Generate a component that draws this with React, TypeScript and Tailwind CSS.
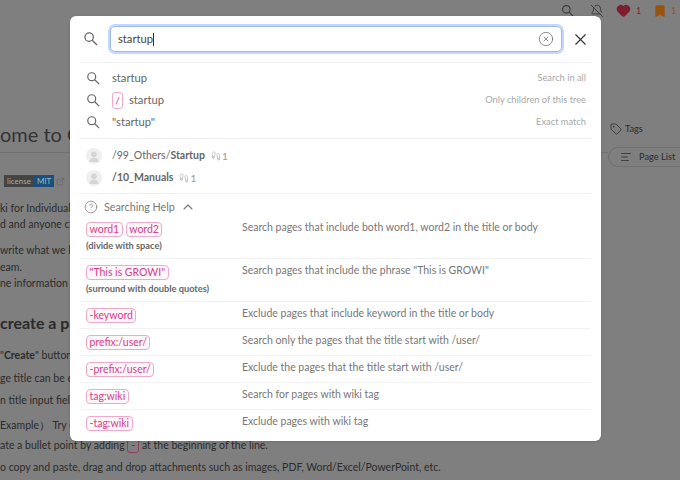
import { AlignLeft, BellOff, Bookmark, ChevronUp, CircleHelp, CircleX, ExternalLink, Footprints, Heart, Tag, X } from "lucide-react"
import type { ReactNode } from "react"

const lato = "font-['Lato','Noto_Sans',sans-serif]"

function SearchIcon({ className }: { className: string }) {
  return (
    <svg viewBox="0 0 24 24" className={className} fill="none" stroke="currentColor" strokeWidth={1.7}>
      <circle cx="9.5" cy="9.5" r="5.6" />
      <path d="M13.7 13.7 20 20" />
    </svg>
  )
}

function Kbd({ children }: { children: ReactNode }) {
  return (
    <span className="inline-flex h-[15px] items-center rounded-[4px] border border-[#efa9c9] bg-[#fdf7fa] px-[2.5px] text-[10.5px] leading-none text-[#d6408a]">
      {children}
    </span>
  )
}

function SuggestRow({ children, hint }: { children: ReactNode; hint: string }) {
  return (
    <div className="flex h-[22px] items-center pl-[5px] pr-[5px]">
      <SearchIcon className="h-[17px] w-[17px] text-[#666]" />
      <div className="ml-[10px] flex flex-1 items-center gap-[6px] text-[11.2px] text-[#666]">{children}</div>
      <span className="text-[9.3px] text-[#a8a8a8]">{hint}</span>
    </div>
  )
}

function PageRow({ children, count }: { children: ReactNode; count: number }) {
  return (
    <div className="flex h-[22px] items-center pl-[6px]">
      <span className="flex h-[16px] w-[16px] items-end justify-center overflow-hidden rounded-full bg-[#efefef]">
        <svg viewBox="0 0 16 16" className="h-[16px] w-[16px]" fill="#d5d5d5">
          <circle cx="8" cy="6.2" r="2.8" />
          <path d="M3.5 14c0-3 2-4.6 4.5-4.6s4.5 1.6 4.5 4.6z" />
        </svg>
      </span>
      <div className="ml-[10px] text-[10.5px] text-[#666]">{children}</div>
      <Footprints className="ml-[6px] h-[10px] w-[10px] text-[#aaa]" strokeWidth={1.5} />
      <span className="ml-[1px] text-[10px] text-[#999]">{count}</span>
    </div>
  )
}

const helpRows: { tags: string[]; note?: string; text: string; h: string }[] = [
  { tags: ["word1", "word2"], note: "(divide with space)", text: "Search pages that include both word1, word2 in the title or body", h: "h-[43px]" },
  { tags: ['"This is GROWI"'], note: "(surround with double quotes)", text: 'Search pages that include the phrase "This is GROWI"', h: "h-[43px]" },
  { tags: ["-keyword"], text: "Exclude pages that include keyword in the title or body", h: "h-[27px]" },
  { tags: ["prefix:/user/"], text: "Search only the pages that the title start with /user/", h: "h-[27px]" },
  { tags: ["-prefix:/user/"], text: "Exclude the pages that the title start with /user/", h: "h-[27px]" },
  { tags: ["tag:wiki"], text: "Search for pages with wiki tag", h: "h-[27px]" },
  { tags: ["-tag:wiki"], text: "Exclude pages with wiki tag", h: "h-[27px]" },
]

function SearchModal() {
  return (
    <div className="absolute left-[70px] top-[16px] h-[425px] w-[531px] rounded-[6px] bg-white px-[10px] shadow-sm">
      <div className="flex h-[47px] items-center border-b border-[#eee]">
        <SearchIcon className="ml-[2px] h-[18px] w-[18px] text-[#666]" />
        <div className="ml-[10px] flex h-[26px] w-[452px] items-center rounded-[5px] border border-[#9db9f3] pl-[7px] pr-[7px] shadow-[0_0_0_2px_#c6d7f9]">
          <span className="text-[11.2px] text-[#444]">startup</span>
          <span className="h-[13px] w-px bg-[#333]" />
          <CircleX className="ml-auto h-[16px] w-[16px] text-[#666]" strokeWidth={1.1} />
        </div>
        <X className="ml-[9px] h-[19px] w-[19px] text-[#333]" strokeWidth={1.4} />
      </div>
      <div className="flex flex-col border-b border-[#eee] pb-[5px] pt-[4px]">
        <SuggestRow hint="Search in all">startup</SuggestRow>
        <SuggestRow hint="Only children of this tree">
          <span className="inline-flex h-[17px] w-[11px] items-center justify-center rounded-[3px] border border-[#efa9c9] text-[10px] text-[#d6408a]">/</span>
          startup
        </SuggestRow>
        <SuggestRow hint="Exact match">"startup"</SuggestRow>
      </div>
      <div className="flex flex-col border-b border-[#eee] pb-[4px] pt-[6px]">
        <PageRow count={1}>/99_Others/<b className="font-bold">Startup</b></PageRow>
        <PageRow count={1}><b className="font-bold">/10_Manuals</b></PageRow>
      </div>
      <div className="flex h-[22px] items-center pl-[4px] pt-[4px] text-[#777]">
        <CircleHelp className="h-[14px] w-[14px]" strokeWidth={1.2} />
        <span className="ml-[6px] text-[10.75px]">Searching Help</span>
        <ChevronUp className="ml-[5px] h-[16px] w-[16px]" strokeWidth={1.6} />
      </div>
      <div className="flex flex-col">
        {helpRows.map((row) => (
          <div key={row.text} className={`flex border-b border-[#f2f2f2] last:border-b-0 ${row.h}`}>
            <div className="w-[162px] pl-[6px] pt-[5.5px]">
              <div className="flex gap-[3px]">
                {row.tags.map((tag) => <Kbd key={tag}>{tag}</Kbd>)}
              </div>
              {row.note && <div className="mt-[2px] whitespace-nowrap text-[9.25px] font-bold leading-[13px] text-[#666]">{row.note}</div>}
            </div>
            <div className="pt-[3.5px] text-[10.5px] leading-[15px] text-[#777]">{row.text}</div>
          </div>
        ))}
      </div>
    </div>
  )
}

function PageBehind() {
  const line = "h-[16px] whitespace-nowrap text-[10.5px] leading-[16px]"
  return (
    <div className="flex h-full flex-col text-[#2b2b2b]">
      <div className="flex h-[21px] items-center justify-end pr-[4px] text-[#3a3a3a]">
        <SearchIcon className="h-[16px] w-[16px]" />
        <BellOff className="ml-[14px] h-[14px] w-[14px]" strokeWidth={1.6} />
        <Heart className="ml-[12px] h-[15px] w-[15px] fill-[#7f1f2e] text-[#7f1f2e]" />
        <span className="ml-[5px] w-[5px] text-[9px] text-[#7f1f2e]">1</span>
        <Bookmark className="ml-[12px] h-[14px] w-[14px] fill-[#98540f] text-[#98540f]" />
        <span className="ml-[4px] w-[5px] text-[9px] text-[#98540f]">1</span>
      </div>
      <div className="flex flex-1">
        <div className="flex w-[608px] shrink-0 flex-col pt-[96px]">
          <div className="h-[36px] border-b border-[#707070] text-[20px] leading-[34px] text-[#333]">ome to GROWI</div>
          <div className="mt-[22px] flex h-[12px] items-center pl-[4px] text-[8px]">
            <span className="flex h-[12px] items-center bg-[#444] px-[3px] text-[#aaa]">license</span>
            <span className="flex h-[12px] items-center bg-[#1d4f7d] px-[3px] text-[#9bb]">MIT</span>
            <ExternalLink className="ml-[2px] h-[9px] w-[9px] text-[#666]" />
          </div>
          <div className={`mt-[13px] ${line}`}>ki for Individual</div>
          <div className={line}>d and anyone can</div>
          <div className={`mt-[10px] ${line}`}>write what we know</div>
          <div className={`mt-[1px] ${line}`}>eam.</div>
          <div className={line}>ne information</div>
          <div className="mt-[16px] h-[32px] whitespace-nowrap text-[16px] font-bold leading-[32px]">create a page</div>
          <div className={`mt-[8px] ${line}`}>"<b>Create</b>" button</div>
          <div className={`mt-[7px] ${line}`}>ge title can be edited</div>
          <div className={`mt-[6px] ${line}`}>n title input field</div>
          <div className={`mt-[9px] ${line}`}>Example） Try entering</div>
          <div className={`mt-[4px] ${line}`}>ate a bullet point by adding <span className="rounded-[3px] border border-[#8a4060] px-[3px] py-[1px] text-[#8a2050]">-</span> at the beginning of the line.</div>
          <div className={`mt-[6px] ${line}`}>o copy and paste, drag and drop attachments such as images, PDF, Word/Excel/PowerPoint, etc.</div>
        </div>
        <div className="flex shrink-0 flex-col pt-[100px] text-[9.25px]">
          <div className="flex h-[16px] items-center gap-[3px] pl-[2px]">
            <Tag className="h-[12px] w-[12px]" strokeWidth={1.5} />
            Tags
          </div>
          <div className="mt-[10px] flex h-[20px] w-[90px] items-center rounded-l-full border border-[#707070] pl-[11px]">
            <AlignLeft className="h-[12px] w-[12px]" strokeWidth={1.5} />
            <span className="ml-[7px] whitespace-nowrap">Page List</span>
          </div>
        </div>
      </div>
    </div>
  )
}

export default function App() {
  return (
    <div className={`relative h-[480px] w-[680px] overflow-hidden bg-[#7f7f7f] ${lato}`}>
      <PageBehind />
      <SearchModal />
    </div>
  )
}
